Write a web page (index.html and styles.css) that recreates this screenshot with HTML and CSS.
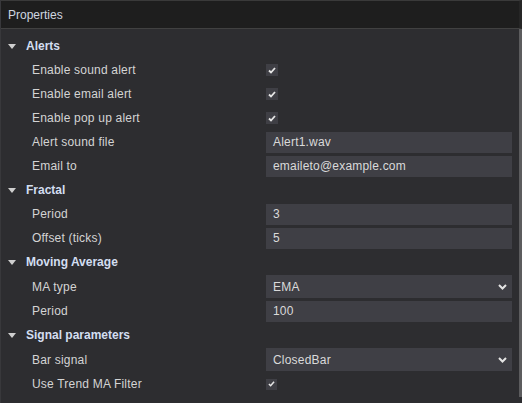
FILE: index.html
```html
<!DOCTYPE html>
<html lang="en">
  <head>
    <meta charset="UTF-8" />
    <meta name="viewport" content="width=device-width, initial-scale=1.0" />
    <title>Properties</title>
    <link rel="stylesheet" href="styles.css">
  </head>
  <body>
    <div class="panel">
      <div class="panelHeader">Properties</div>
      <div class="panelBody">
        <div class="propList">
          <div class="category"><span class="arrow"></span>Alerts</div>
          <div class="row">
            <div class="label">Enable sound alert</div>
            <div class="value"><span class="checkBox"><svg width="8" height="7" viewBox="0 0 8 7"><path d="M1 3.5 L3 5.5 L7 1" /></svg></span></div>
          </div>
          <div class="row">
            <div class="label">Enable email alert</div>
            <div class="value"><span class="checkBox"><svg width="8" height="7" viewBox="0 0 8 7"><path d="M1 3.5 L3 5.5 L7 1" /></svg></span></div>
          </div>
          <div class="row">
            <div class="label">Enable pop up alert</div>
            <div class="value"><span class="checkBox"><svg width="8" height="7" viewBox="0 0 8 7"><path d="M1 3.5 L3 5.5 L7 1" /></svg></span></div>
          </div>
          <div class="row">
            <div class="label">Alert sound file</div>
            <div class="value"><div class="textBox">Alert1.wav</div></div>
          </div>
          <div class="row">
            <div class="label">Email to</div>
            <div class="value"><div class="textBox">emaileto@example.com</div></div>
          </div>

          <div class="category"><span class="arrow"></span>Fractal</div>
          <div class="row">
            <div class="label">Period</div>
            <div class="value"><div class="textBox">3</div></div>
          </div>
          <div class="row">
            <div class="label">Offset (ticks)</div>
            <div class="value"><div class="textBox">5</div></div>
          </div>

          <div class="category"><span class="arrow"></span>Moving Average</div>
          <div class="row selectRow">
            <div class="label">MA type</div>
            <div class="value">
              <div class="selectBox">EMA<svg class="chevron" width="9" height="6" viewBox="0 0 9 6"><path d="M1 1 L4.5 4.5 L8 1" /></svg></div>
            </div>
          </div>
          <div class="row">
            <div class="label">Period</div>
            <div class="value"><div class="textBox">100</div></div>
          </div>

          <div class="category"><span class="arrow"></span>Signal parameters</div>
          <div class="row selectRow">
            <div class="label">Bar signal</div>
            <div class="value">
              <div class="selectBox">ClosedBar<svg class="chevron" width="9" height="6" viewBox="0 0 9 6"><path d="M1 1 L4.5 4.5 L8 1" /></svg></div>
            </div>
          </div>
          <div class="row">
            <div class="label">Use Trend MA Filter</div>
            <div class="value"><span class="checkBox small"><svg width="7" height="6" viewBox="0 0 8 7"><path d="M1 3.5 L3 5.5 L7 1" /></svg></span></div>
          </div>
        </div>
        <div class="scrollBar"><div class="scrollThumb"></div></div>
      </div>
    </div>
  </body>
</html>
```

FILE: styles.css
```css
html {
  box-sizing: border-box;
  font-family: "Liberation Sans", Arial, sans-serif;
  font-size: 12px;
}

*,
*:before,
*:after {
  box-sizing: inherit;
}

body {
  padding: 0;
  margin: 0;
  background-color: #2d2d30;
}

.panel {
  width: 522px;
  height: 403px;
  display: flex;
  flex-direction: column;
  overflow: hidden;
  border-left: 1px solid #38383b;
}

.panelHeader {
  height: 29px;
  padding: 0 0 0 7px;
  display: flex;
  align-items: center;
  background-color: #1e1e1e;
  border-top: 1px solid #3a3a3a;
  border-bottom: 1px solid #414141;
  border-right: 3px solid #262626;
  color: #cfd6e0;
}

.panelBody {
  flex: 1;
  display: flex;
  flex-direction: row;
}

.propList {
  width: 517px;
  padding-top: 5px;
}

.scrollBar {
  width: 4px;
  display: flex;
  justify-content: flex-end;
}

.scrollThumb {
  width: 3px;
  height: 368px;
  background-color: #5c5c5e;
}

.category {
  height: 24px;
  display: flex;
  align-items: center;
  padding-left: 7px;
  font-weight: bold;
  color: #d3def0;
}

.arrow {
  display: inline-block;
  width: 0;
  height: 0;
  margin-right: 10px;
  border-left: 4px solid transparent;
  border-right: 4px solid transparent;
  border-top: 5px solid #cfcfcf;
}

.row {
  height: 24px;
  display: grid;
  grid-template-columns: 265px 246px;
  align-items: center;
}

.selectRow {
  height: 25px;
}

.label {
  padding-left: 31px;
  color: #d4d4d4;
  letter-spacing: 0.2px;
}

.value {
  display: flex;
  align-items: center;
}

.textBox,
.selectBox {
  width: 246px;
  height: 21px;
  display: flex;
  align-items: center;
  padding-left: 7px;
  background-color: #3f3f45;
  color: #dadada;
  letter-spacing: 0.2px;
}

.selectBox {
  height: 23px;
  justify-content: space-between;
  padding-right: 5px;
}

.chevron path {
  fill: none;
  stroke: #e4e4e4;
  stroke-width: 2;
}

.checkBox {
  width: 12px;
  height: 12px;
  display: flex;
  align-items: center;
  justify-content: center;
  background-color: #3f3f45;
}

.checkBox path {
  fill: none;
  stroke: #e6e6e6;
  stroke-width: 1.8;
}

.checkBox.small {
  width: 11px;
  height: 11px;
}
```
